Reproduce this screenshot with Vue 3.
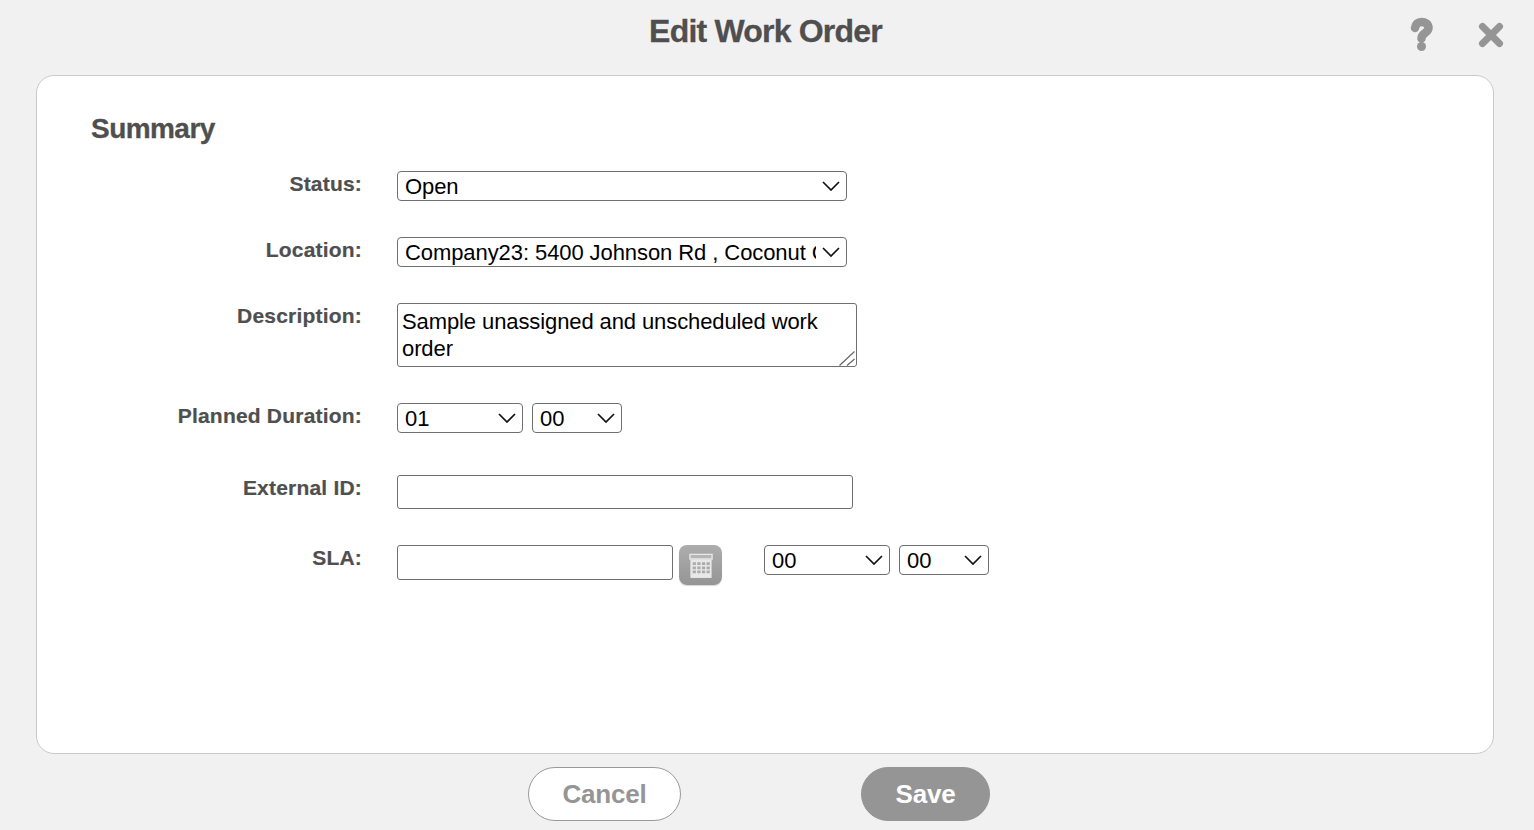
<script setup>
const hours = ['00', '01', '02', '03', '04']
const minutes = ['00', '15', '30', '45']
</script>

<template>
  <div class="page">
    <header class="top">
      <span></span>
      <h1>Edit Work Order</h1>
      <div class="top-icons">
        <svg class="help" width="24" height="36" viewBox="0 0 24 36">
          <path d="M5 11C5.500 7 8 5 11.500 5s7 2 7 6c0 5-7 5-7 10.500" fill="none" stroke="#959595" stroke-width="8.500" stroke-linecap="round" stroke-linejoin="round" />
          <circle cx="11.500" cy="29.500" r="4.500" fill="#959595" />
        </svg>
        <svg class="close" width="26" height="26" viewBox="0 0 26 26">
          <path d="M4.500 4.500l17 17M21.500 4.500l-17 17" fill="none" stroke="#959595" stroke-width="7" stroke-linecap="round" />
        </svg>
      </div>
    </header>

    <main class="panel">
      <h2>Summary</h2>
      <div class="form">
        <div class="row">
          <label>Status:</label>
          <div class="select w450">
            <select><option>Open</option><option>Closed</option></select>
            <svg class="chev" width="18" height="10" viewBox="0 0 18 10"><path d="M1 1l8 8 8-8" fill="none" stroke="#111" stroke-width="1.700" /></svg>
          </div>
        </div>
        <div class="row">
          <label>Location:</label>
          <div class="select w450">
            <select><option>Company23: 5400 Johnson Rd , Coconut Creek, FL</option></select>
            <svg class="chev" width="18" height="10" viewBox="0 0 18 10"><path d="M1 1l8 8 8-8" fill="none" stroke="#111" stroke-width="1.700" /></svg>
          </div>
        </div>
        <div class="row">
          <label>Description:</label>
          <div class="desc-wrap">
            <textarea class="desc">Sample unassigned and unscheduled work order</textarea>
            <svg class="grip" width="18" height="16" viewBox="0 0 18 16">
              <path d="M1.500 15.500L16.500 1.500M9 15.500l7.500-6.500" fill="none" stroke="#666" stroke-width="1.200" />
            </svg>
          </div>
        </div>
        <div class="row">
          <label>Planned Duration:</label>
          <div class="controls">
            <div class="select w126">
              <select><option>01</option><option v-for="h in hours" :key="h">{{ h }}</option></select>
              <svg class="chev" width="18" height="10" viewBox="0 0 18 10"><path d="M1 1l8 8 8-8" fill="none" stroke="#111" stroke-width="1.700" /></svg>
            </div>
            <div class="select w90">
              <select><option v-for="m in minutes" :key="m">{{ m }}</option></select>
              <svg class="chev" width="18" height="10" viewBox="0 0 18 10"><path d="M1 1l8 8 8-8" fill="none" stroke="#111" stroke-width="1.700" /></svg>
            </div>
          </div>
        </div>
        <div class="row external">
          <label>External ID:</label>
          <input class="ext" type="text" />
        </div>
        <div class="row">
          <label>SLA:</label>
          <div class="controls">
            <input class="sla" type="text" />
            <button class="cal" type="button" aria-label="Calendar">
              <svg width="24" height="27" viewBox="0 0 26 29">
                <path d="M1 2.500h24v5H1z" fill="#b5b5b5" stroke="#e8e8e8" stroke-width="1.500" />
                <path d="M1.500 8h23v20h-23z" fill="#e8e8e8" />
                <g fill="#ababab">
                  <path d="M4 11h3.500v3H4zM9 11h3.500v3H9zM14 11h3.500v3H14zM19 11h3.500v3H19z" />
                  <path d="M4 15.500h3.500v3H4zM9 15.500h3.500v3H9zM14 15.500h3.500v3H14zM19 15.500h3.500v3H19z" />
                  <path d="M4 20h3.500v3H4zM9 20h3.500v3H9zM14 20h3.500v3H14zM19 20h3.500v3H19z" />
                </g>
              </svg>
            </button>
            <div class="select w126 after-cal">
              <select><option v-for="h in hours" :key="h">{{ h }}</option></select>
              <svg class="chev" width="18" height="10" viewBox="0 0 18 10"><path d="M1 1l8 8 8-8" fill="none" stroke="#111" stroke-width="1.700" /></svg>
            </div>
            <div class="select w90">
              <select><option v-for="m in minutes" :key="m">{{ m }}</option></select>
              <svg class="chev" width="18" height="10" viewBox="0 0 18 10"><path d="M1 1l8 8 8-8" fill="none" stroke="#111" stroke-width="1.700" /></svg>
            </div>
          </div>
        </div>
      </div>
    </main>

    <footer class="actions">
      <button class="btn cancel" type="button">Cancel</button>
      <button class="btn save" type="button">Save</button>
    </footer>
  </div>
</template>

<style>
body {
  background: #f1f1f1;
}
</style>

<style scoped>
.page {
  height: 830px;
  overflow: hidden;
  background: #f1f1f1;
  font-family: "Liberation Sans", Arial, sans-serif;
  color: #4f4f4f;
}

.top {
  height: 75px;
  display: grid;
  grid-template-columns: 1fr auto 1fr;
  padding-right: 3px;
}

.top h1 {
  margin: 12px 0 0;
  font-size: 32px;
  line-height: 38px;
  letter-spacing: -0.8px;
  font-weight: 700;
  -webkit-text-stroke: 0.3px #4f4f4f;
}

.top-icons {
  display: flex;
  justify-content: flex-end;
  align-items: flex-start;
  gap: 44px;
  padding: 17px 28px 0 0;
}

.close {
  margin-top: 5px;
  margin-right: -1px;
}

.panel {
  height: 679px;
  box-sizing: border-box;
  margin: 0 40px 0 36px;
  background: #fff;
  border: 1px solid #c9c9c9;
  border-radius: 18px;
  padding: 36px 0 0 54px;
}

.panel h2 {
  margin: 0;
  font-size: 28px;
  line-height: 34px;
  letter-spacing: -0.55px;
  font-weight: 700;
  -webkit-text-stroke: 0.3px #4f4f4f;
}

.form {
  margin-top: 25px;
  display: flex;
  flex-direction: column;
  gap: 36px;
}

.row {
  display: flex;
  align-items: flex-start;
  margin-left: -54px;
}

.row.external {
  margin-top: 6px;
}

.row label {
  width: 325px;
  flex: none;
  margin-right: 35px;
  text-align: right;
  font-size: 21px;
  line-height: 25px;
  font-weight: 700;
  letter-spacing: 0.2px;
  -webkit-text-stroke: 0.2px #4f4f4f;
}

.controls {
  display: flex;
  align-items: flex-start;
  gap: 9px;
}

.select {
  position: relative;
  height: 30px;
  flex: none;
}

.select select {
  width: 100%;
  height: 100%;
  box-sizing: border-box;
  appearance: none;
  border: 1px solid #6f6f6f;
  border-radius: 4px;
  background: #fff;
  padding: 1px 30px 0 7px;
  font: 22px "Liberation Sans", Arial, sans-serif;
  letter-spacing: -0.08px;
  color: #000;
}

.chev {
  position: absolute;
  top: 10px;
  right: 7px;
  pointer-events: none;
}

.w450 { width: 450px; }
.w126 { width: 126px; }
.w90 { width: 90px; }

.desc-wrap {
  position: relative;
  width: 460px;
  height: 64px;
}

.desc {
  display: block;
  width: 100%;
  height: 100%;
  box-sizing: border-box;
  border: 1px solid #6f6f6f;
  border-radius: 3px;
  padding: 4px;
  margin: 0;
  font: 22px/27px "Liberation Sans", Arial, sans-serif;
  letter-spacing: -0.1px;
  color: #000;
  outline: none;
  resize: none;
}

.grip {
  position: absolute;
  right: 1px;
  bottom: 1px;
  pointer-events: none;
}

.ext,
.sla {
  height: 34px;
  box-sizing: border-box;
  border: 1px solid #6f6f6f;
  border-radius: 3px;
  background: #fff;
  margin: 0;
}

.ext { width: 456px; }
.sla { width: 276px; height: 35px; margin-right: -3px; }

.cal {
  width: 43px;
  height: 40px;
  padding: 0;
  border: 0;
  border-radius: 8px;
  background: linear-gradient(#adadad, #959595);
  box-shadow: 0 1px 1px #d5d5d5;
  display: flex;
  align-items: center;
  justify-content: center;
}

.after-cal {
  margin-left: 33px;
}

.actions {
  display: flex;
  justify-content: center;
  gap: 180px;
  padding: 13px 16px 0 0;
}

.btn {
  height: 54px;
  border-radius: 27px;
  font: 700 26px "Liberation Sans", Arial, sans-serif;
  letter-spacing: -0.2px;
  padding: 0;
}

.cancel {
  width: 153px;
  background: #fff;
  border: 1px solid #999;
  color: #959595;
}

.save {
  width: 129px;
  background: #959595;
  border: 1px solid #959595;
  color: #fff;
}
</style>
